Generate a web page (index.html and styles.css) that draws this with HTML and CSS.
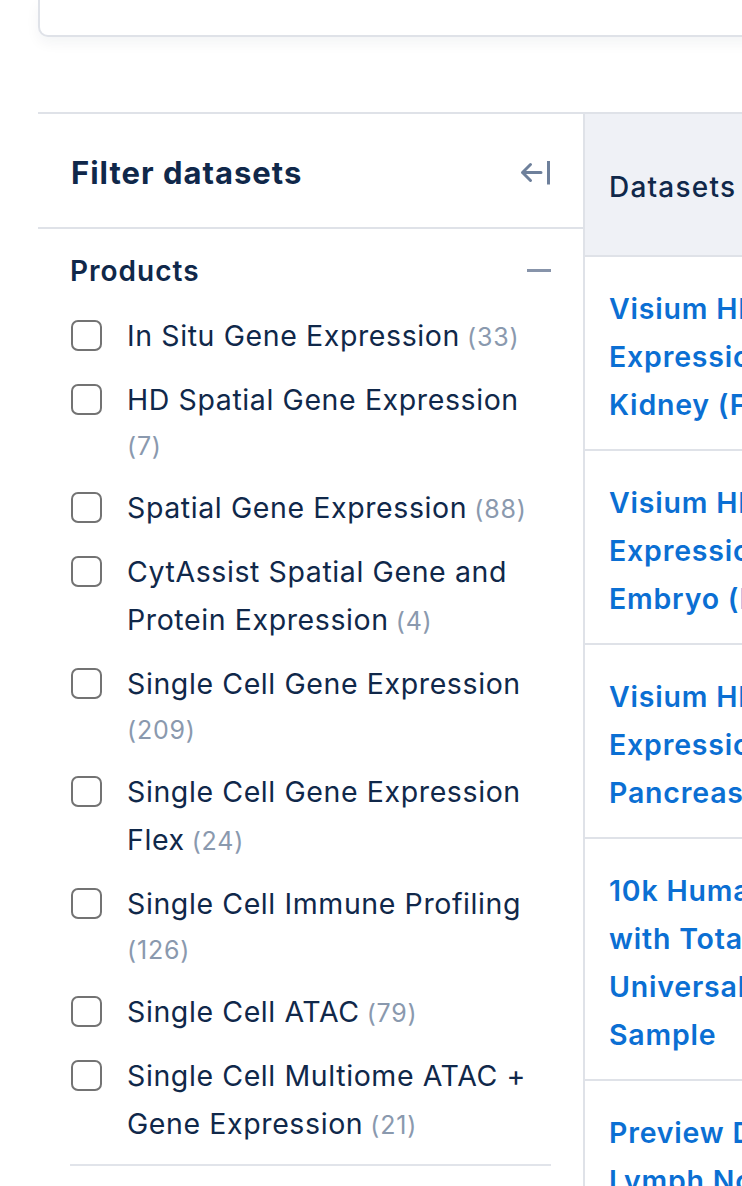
FILE: index.html
```html
<!DOCTYPE html>
<html lang="en">
<head>
<meta charset="utf-8">
<title>Datasets</title>
<link rel="stylesheet" href="styles.css">
</head>
<body>
<div class="page">
  <div class="search-card"></div>
  <div class="browser">
    <aside class="filters">
      <div class="filters-head">
        <h2 class="filters-title">Filter datasets</h2>
        <button class="collapse" aria-label="Collapse filters">
          <svg width="32" height="28" viewBox="0 0 32 28" fill="none" stroke="#6e809b" stroke-width="3" stroke-linecap="round" stroke-linejoin="round">
            <path d="M22 13.5H3.5M11.5 5.5L3.5 13.5L11.5 21.5"/>
            <path d="M29.5 2V25.5" stroke-linecap="butt"/>
          </svg>
        </button>
      </div>
      <section class="facet">
        <div class="facet-head">
          <h3 class="facet-title">Products</h3>
          <span class="minus"></span>
        </div>
        <ul class="options">
          <li class="option"><span class="box"></span><span class="label"><span class="name">In Situ Gene Expression</span> <span class="count">(33)</span></span></li>
          <li class="option"><span class="box"></span><span class="label"><span class="name">HD Spatial Gene Expression</span> <span class="count">(7)</span></span></li>
          <li class="option"><span class="box"></span><span class="label"><span class="name">Spatial Gene Expression</span> <span class="count">(88)</span></span></li>
          <li class="option"><span class="box"></span><span class="label"><span class="name">CytAssist Spatial Gene and Protein Expression</span> <span class="count">(4)</span></span></li>
          <li class="option"><span class="box"></span><span class="label"><span class="name">Single Cell Gene Expression</span> <span class="count">(209)</span></span></li>
          <li class="option"><span class="box"></span><span class="label"><span class="name">Single Cell Gene Expression Flex</span> <span class="count">(24)</span></span></li>
          <li class="option"><span class="box"></span><span class="label"><span class="name">Single Cell Immune Profiling</span> <span class="count">(126)</span></span></li>
          <li class="option"><span class="box"></span><span class="label"><span class="name">Single Cell ATAC</span> <span class="count">(79)</span></span></li>
          <li class="option"><span class="box"></span><span class="label"><span class="name">Single Cell Multiome ATAC + Gene Expression</span> <span class="count">(21)</span></span></li>
        </ul>
      </section>
    </aside>
    <section class="results">
      <div class="results-head">Datasets</div>
      <div class="row"><a class="title" href="#">Visium HD Spatial Gene<br>Expression Library, Human<br>Kidney (FFPE)</a></div>
      <div class="row"><a class="title" href="#">Visium HD Spatial Gene<br>Expression Library, Mouse<br>Embryo (FFPE)</a></div>
      <div class="row"><a class="title" href="#">Visium HD Spatial Gene<br>Expression Library, Human<br>Pancreas (FFPE)</a></div>
      <div class="row"><a class="title" href="#">10k Human PBMCs Stained<br>with TotalSeq-C Human<br>Universal Cocktail, Singleplex<br>Sample</a></div>
      <div class="row"><a class="title" href="#">Preview Data: FFPE Human<br>Lymph Node with 5K Panel</a></div>
    </section>
  </div>
</div>
</body>
</html>
```

FILE: styles.css
```css
html, body {
  margin: 0;
  padding: 0;
  overflow: hidden;
  background: #ffffff;
}

body {
  font-family: "Inter", "Liberation Sans", sans-serif;
  color: #10284a;
}

.page {
  padding-left: 38px;
  width: 1400px;
}

.search-card {
  height: 35px;
  border: 2px solid #dfe2e8;
  border-top: none;
  border-radius: 0 0 10px 10px;
  background: #ffffff;
  box-shadow: 0 6px 14px rgba(20, 30, 60, 0.05);
}

.browser {
  margin-top: 75px;
  border-top: 2px solid #dfe2e8;
  display: flex;
  align-items: stretch;
}

.filters {
  width: 545px;
  flex: none;
}

.filters-head {
  height: 115px;
  box-sizing: border-box;
  border-bottom: 2px solid #dfe2e8;
  padding: 4px 32px 0 33px;
  display: flex;
  align-items: center;
  justify-content: space-between;
}

.filters-title {
  margin: 0;
  font-size: 31px;
  font-weight: 700;
  letter-spacing: 1px;
}

.collapse {
  border: 0;
  background: none;
  padding: 0;
  display: flex;
}

.facet {
  margin: 0 32px;
  padding-top: 22px;
  padding-bottom: 16px;
  border-bottom: 2px solid #e1e4ea;
}

.facet-head {
  height: 40px;
  display: flex;
  align-items: center;
  justify-content: space-between;
}

.facet-title {
  margin: 0;
  font-size: 28px;
  font-weight: 600;
  letter-spacing: 1px;
}

.minus {
  width: 24px;
  height: 3px;
  background: #8794aa;
  margin-top: -2px;
}

.options {
  list-style: none;
  margin: 21px 0 0;
  padding: 0;
  display: flex;
  flex-direction: column;
  gap: 16px;
}

.option {
  display: flex;
  align-items: flex-start;
  gap: 25px;
}

.box {
  flex: none;
  width: 27px;
  height: 27px;
  margin-top: 8px;
  margin-left: 1px;
  border: 2px solid #737373;
  border-radius: 7px;
}

.label {
  font-size: 25px;
  line-height: 44px;
}

.name {
  font-size: 28.5px;
  line-height: 48px;
  letter-spacing: 0.6px;
  color: #10284a;
}

.count {
  color: #8a99ae;
  font-size: 25px;
  letter-spacing: 0.8px;
}

.results {
  flex: 1;
  border-left: 2px solid #dfe2e8;
}

.results-head {
  height: 143px;
  box-sizing: border-box;
  background: #eff1f6;
  border-bottom: 2px solid #dfe2e8;
  padding: 4px 0 0 24px;
  display: flex;
  align-items: center;
  font-size: 28px;
  font-weight: 500;
  letter-spacing: 1.2px;
  color: #10284a;
}

.row {
  padding: 28px 24px 20px;
  border-bottom: 2px solid #dfe2e8;
}

.title {
  color: #0b6fd3;
  text-decoration: none;
  font-size: 28.5px;
  font-weight: 600;
  letter-spacing: 0.8px;
  line-height: 48px;
}
```
